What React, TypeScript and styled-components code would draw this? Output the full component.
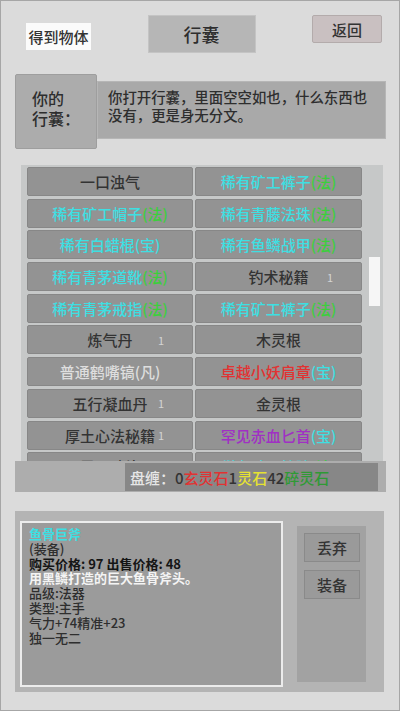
import React from 'react'
import styled, { createGlobalStyle } from 'styled-components'

const GlobalStyle = createGlobalStyle`
  html, body {
    margin: 0;
    padding: 0;
    background: #dbdbdb;
  }
  body {
    font-family: "Noto Sans CJK SC", "Noto Sans", "Liberation Sans", sans-serif;
    color: #2e2e2e;
  }
`

const C = {
  dark: '#333333',
  cyan: '#3edfe2',
  green: '#3ccf3c',
  red: '#e23232',
  purple: '#a030c4',
  light: '#dedede',
  yellow: '#e6e232',
  moss: '#2f9a35',
}

type Part = { text: string; color: string }
type Item = { parts: Part[]; count?: number }

const rare = (name: string, suffix = '(法)', suffixColor = C.green): Item => ({
  parts: [
    { text: name, color: C.cyan },
    { text: suffix, color: suffixColor },
  ],
})
const plain = (name: string, count?: number, color = C.dark): Item => ({
  parts: [{ text: name, color }],
  count,
})

const items: Item[] = [
  plain('一口浊气'),
  rare('稀有矿工裤子'),
  rare('稀有矿工帽子'),
  rare('稀有青藤法珠'),
  rare('稀有白蜡棍', '(宝)', C.cyan),
  rare('稀有鱼鳞战甲'),
  rare('稀有青茅道靴'),
  plain('钓术秘籍', 1),
  rare('稀有青茅戒指'),
  rare('稀有矿工裤子'),
  plain('炼气丹', 1),
  plain('木灵根'),
  plain('普通鹤嘴镐(凡)', undefined, C.light),
  {
    parts: [
      { text: '卓越小妖肩章', color: C.red },
      { text: '(宝)', color: C.cyan },
    ],
  },
  plain('五行凝血丹', 1),
  plain('金灵根'),
  plain('厚土心法秘籍', 1),
  {
    parts: [
      { text: '罕见赤血匕首', color: C.purple },
      { text: '(宝)', color: C.cyan },
    ],
  },
  plain('灵石碎片'),
  rare('稀有矿工护腕'),
]

const Screen = styled.div`
  box-sizing: border-box;
  width: 400px;
  height: 711px;
  border: 1px solid #a6a6a6;
  background: #dbdbdb;
  padding-top: 14px;
  display: flex;
  flex-direction: column;
  overflow: hidden;
`

const TopRow = styled.div`
  display: flex;
  justify-content: space-between;
  align-items: flex-start;
  padding: 0 17px 0 25px;
`

const GetButton = styled.div`
  margin-top: 8px;
  width: 65px;
  height: 27px;
  background: #fbfbfb;
  font-size: 15px;
  font-weight: 500;
  display: flex;
  align-items: center;
  justify-content: center;
  color: #333;
`

const TitleBox = styled.div`
  width: 108px;
  height: 38px;
  background: #b6b6b6;
  border: 1px solid #c4c4c4;
  box-sizing: border-box;
  font-size: 18px;
  font-weight: 500;
  display: flex;
  align-items: center;
  justify-content: center;
  color: #2e2e2e;
`

const BackButton = styled.div`
  width: 70px;
  height: 28px;
  box-sizing: border-box;
  background: #c9c0c1;
  border: 1px solid #b3abab;
  border-radius: 2px;
  font-size: 15px;
  font-weight: 500;
  display: flex;
  align-items: center;
  justify-content: center;
  color: #333;
`

const DescRow = styled.div`
  display: flex;
  align-items: flex-start;
  margin-top: 21px;
  padding-left: 14px;
`

const SideLabel = styled.div`
  box-sizing: border-box;
  width: 82px;
  height: 75px;
  background: #acacac;
  border: 1px solid #9e9e9e;
  border-radius: 2px;
  font-size: 16px;
  font-weight: 500;
  line-height: 20px;
  padding: 13px 0 0 16px;
  color: #2e2e2e;
`

const DescText = styled.div`
  box-sizing: border-box;
  margin-top: 7px;
  width: 289px;
  height: 58px;
  background: #a9a9a9;
  border: 1px solid #b6b6b6;
  font-size: 14.4px;
  font-weight: 500;
  line-height: 18px;
  padding: 6px 8px 0 10px;
  color: #2e2e2e;
`

const ListPanel = styled.div`
  margin: 16px 16px 0 20px;
  height: 296px;
  box-sizing: border-box;
  padding: 2px 0 0 6px;
  background: #c6c8c8;
  display: flex;
  overflow: hidden;
`

const Grid = styled.div`
  width: 335px;
  display: grid;
  grid-template-columns: 166px 167px;
  grid-auto-rows: 29px;
  column-gap: 2px;
  row-gap: 2.7px;
`

const Cell = styled.div`
  position: relative;
  box-sizing: border-box;
  background: #939393;
  border: 1px solid #878787;
  border-radius: 2px;
  display: flex;
  align-items: center;
  justify-content: center;
  font-size: 15px;
  font-weight: 500;
  white-space: nowrap;
`

const Count = styled.span`
  position: absolute;
  right: 28px;
  top: 50%;
  transform: translateY(-50%);
  font-size: 11px;
  font-weight: 400;
  color: #d4d4d4;
`

const Track = styled.div`
  flex: 1;
  padding-left: 7px;
`

const Thumb = styled.div`
  margin-top: 90px;
  width: 11px;
  height: 49px;
  background: #f6f6f6;
`

const MoneyBar = styled.div`
  margin: 0 13px 0 14px;
  height: 31px;
  box-sizing: border-box;
  background: #adadad;
  display: flex;
  justify-content: flex-end;
  padding: 2px 8px 1px 0;
`

const MoneyInner = styled.div`
  box-sizing: border-box;
  width: 253px;
  background: #878787;
  display: flex;
  align-items: center;
  padding-left: 5px;
  font-size: 15px;
  font-weight: 500;
  white-space: nowrap;
`

const Colored = styled.span<{ $color: string }>`
  color: ${({ $color }) => $color};
`

const BottomPanel = styled.div`
  margin: 19px 15px 0 14px;
  height: 181px;
  box-sizing: border-box;
  background: #b4b4b4;
  display: flex;
  align-items: flex-start;
  padding: 10px 0 0 5px;
`

const DetailBox = styled.div`
  box-sizing: border-box;
  width: 263px;
  height: 166px;
  border: 2px solid #ececec;
  background: #9b9b9b;
  padding: 4px 6px 0 7px;
  font-size: 13px;
  line-height: 14.8px;
  color: #2e2e2e;
`

const DetailLine = styled.div<{ $color?: string; $bold?: boolean }>`
  color: ${({ $color }) => $color ?? '#2e2e2e'};
  font-weight: ${({ $bold }) => ($bold ? 700 : 500)};
  white-space: nowrap;
`

const ActionPanel = styled.div`
  margin: 5px 0 0 14px;
  width: 69px;
  height: 156px;
  box-sizing: border-box;
  background: #a2a2a2;
  padding: 7px 0 0 7px;
  display: flex;
  flex-direction: column;
  gap: 8px;
`

const ActionButton = styled.div`
  box-sizing: border-box;
  width: 56px;
  height: 29px;
  background: #9a9a9a;
  border: 1px solid #8a8a8a;
  font-size: 15px;
  font-weight: 500;
  display: flex;
  align-items: center;
  justify-content: center;
  color: #333;
`

const App = () => {
  return (
    <>
      <GlobalStyle />
      <Screen>
        <TopRow>
          <GetButton>得到物体</GetButton>
          <TitleBox>行囊</TitleBox>
          <BackButton>返回</BackButton>
        </TopRow>

        <DescRow>
          <SideLabel>
            你的
            <br />
            行囊：
          </SideLabel>
          <DescText>你打开行囊，里面空空如也，什么东西也没有，更是身无分文。</DescText>
        </DescRow>

        <ListPanel>
          <Grid>
            {items.map((item, i) => (
              <Cell key={i}>
                {item.parts.map((p, j) => (
                  <Colored key={j} $color={p.color}>
                    {p.text}
                  </Colored>
                ))}
                {item.count !== undefined && <Count>{item.count}</Count>}
              </Cell>
            ))}
          </Grid>
          <Track>
            <Thumb />
          </Track>
        </ListPanel>

        <MoneyBar>
          <MoneyInner>
            <Colored $color="#e6e6e6">盘缠：</Colored>
            <Colored $color={C.dark}>0</Colored>
            <Colored $color={C.red}>玄灵石</Colored>
            <Colored $color={C.dark}>1</Colored>
            <Colored $color={C.yellow}>灵石</Colored>
            <Colored $color={C.dark}>42</Colored>
            <Colored $color={C.moss}>碎灵石</Colored>
          </MoneyInner>
        </MoneyBar>

        <BottomPanel>
          <DetailBox>
            <DetailLine $color={C.cyan} $bold>
              鱼骨巨斧
            </DetailLine>
            <DetailLine>(装备)</DetailLine>
            <DetailLine $color="#151515" $bold>
              购买价格: 97 出售价格: 48
            </DetailLine>
            <DetailLine $color="#f4f4f4" $bold>
              用黑鳞打造的巨大鱼骨斧头。
            </DetailLine>
            <DetailLine>品级:法器</DetailLine>
            <DetailLine>类型:主手</DetailLine>
            <DetailLine>气力+74精准+23</DetailLine>
            <DetailLine>独一无二</DetailLine>
          </DetailBox>
          <ActionPanel>
            <ActionButton>丢弃</ActionButton>
            <ActionButton>装备</ActionButton>
          </ActionPanel>
        </BottomPanel>
      </Screen>
    </>
  )
}

export default App
